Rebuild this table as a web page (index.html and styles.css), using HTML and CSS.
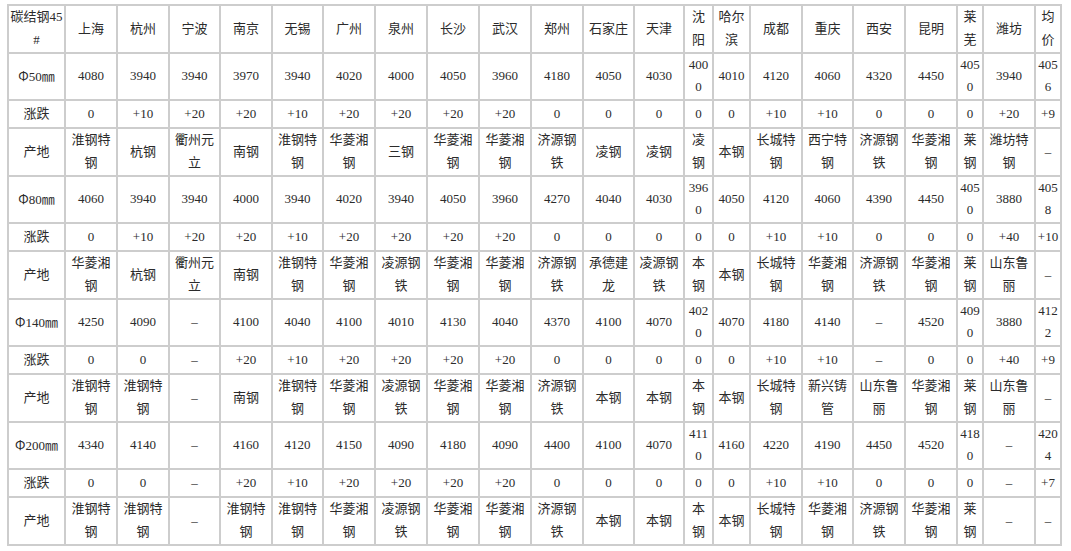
FILE: index.html
```html
<!DOCTYPE html>
<html lang="zh-CN">
<head>
<meta charset="utf-8">
<title>碳结钢45#价格</title>
<link rel="stylesheet" href="styles.css">
</head>
<body>
<table class="price-table">
<colgroup>
<col class="w57"><col class="w52"><col class="w52"><col class="w51"><col class="w52"><col class="w51"><col class="w52"><col class="w52"><col class="w52"><col class="w52"><col class="w52"><col class="w51"><col class="w50"><col class="w29"><col class="w37"><col class="w52"><col class="w51"><col class="w52"><col class="w52"><col class="w26"><col class="w52"><col class="w26">
</colgroup>
<tbody>
<tr class="tall"><td>碳结钢45#</td><td>上海</td><td>杭州</td><td>宁波</td><td>南京</td><td>无锡</td><td>广州</td><td>泉州</td><td>长沙</td><td>武汉</td><td>郑州</td><td>石家庄</td><td>天津</td><td>沈阳</td><td>哈尔滨</td><td>成都</td><td>重庆</td><td>西安</td><td>昆明</td><td>莱芜</td><td>潍坊</td><td>均价</td></tr>

<tr class="tall"><td><span class="phi">Φ</span>50㎜</td><td>4080</td><td>3940</td><td>3940</td><td>3970</td><td>3940</td><td>4020</td><td>4000</td><td>4050</td><td>3960</td><td>4180</td><td>4050</td><td>4030</td><td>4000</td><td>4010</td><td>4120</td><td>4060</td><td>4320</td><td>4450</td><td>4050</td><td>3940</td><td>4056</td></tr>
<tr class="short"><td>涨跌</td><td>0</td><td>+10</td><td>+20</td><td>+20</td><td>+10</td><td>+20</td><td>+20</td><td>+20</td><td>+20</td><td>0</td><td>0</td><td>0</td><td>0</td><td>0</td><td>+10</td><td>+10</td><td>0</td><td>0</td><td>0</td><td>+20</td><td>+9</td></tr>
<tr class="tall"><td>产地</td><td>淮钢特钢</td><td>杭钢</td><td>衢州元立</td><td>南钢</td><td>淮钢特钢</td><td>华菱湘钢</td><td>三钢</td><td>华菱湘钢</td><td>华菱湘钢</td><td>济源钢铁</td><td>凌钢</td><td>凌钢</td><td>凌钢</td><td>本钢</td><td>长城特钢</td><td>西宁特钢</td><td>济源钢铁</td><td>华菱湘钢</td><td>莱钢</td><td>潍坊特钢</td><td>–</td></tr>

<tr class="tall"><td><span class="phi">Φ</span>80㎜</td><td>4060</td><td>3940</td><td>3940</td><td>4000</td><td>3940</td><td>4020</td><td>3940</td><td>4050</td><td>3960</td><td>4270</td><td>4040</td><td>4030</td><td>3960</td><td>4050</td><td>4120</td><td>4060</td><td>4390</td><td>4450</td><td>4050</td><td>3880</td><td>4058</td></tr>
<tr class="short"><td>涨跌</td><td>0</td><td>+10</td><td>+20</td><td>+20</td><td>+10</td><td>+20</td><td>+20</td><td>+20</td><td>+20</td><td>0</td><td>0</td><td>0</td><td>0</td><td>0</td><td>+10</td><td>+10</td><td>0</td><td>0</td><td>0</td><td>+40</td><td>+10</td></tr>
<tr class="tall"><td>产地</td><td>华菱湘钢</td><td>杭钢</td><td>衢州元立</td><td>南钢</td><td>淮钢特钢</td><td>华菱湘钢</td><td>凌源钢铁</td><td>华菱湘钢</td><td>华菱湘钢</td><td>济源钢铁</td><td>承德建龙</td><td>凌源钢铁</td><td>本钢</td><td>本钢</td><td>长城特钢</td><td>华菱湘钢</td><td>济源钢铁</td><td>华菱湘钢</td><td>莱钢</td><td>山东鲁丽</td><td>–</td></tr>

<tr class="tall"><td><span class="phi">Φ</span>140㎜</td><td>4250</td><td>4090</td><td>–</td><td>4100</td><td>4040</td><td>4100</td><td>4010</td><td>4130</td><td>4040</td><td>4370</td><td>4100</td><td>4070</td><td>4020</td><td>4070</td><td>4180</td><td>4140</td><td>–</td><td>4520</td><td>4090</td><td>3880</td><td>4122</td></tr>
<tr class="short"><td>涨跌</td><td>0</td><td>0</td><td>–</td><td>+20</td><td>+10</td><td>+20</td><td>+20</td><td>+20</td><td>+20</td><td>0</td><td>0</td><td>0</td><td>0</td><td>0</td><td>+10</td><td>+10</td><td>–</td><td>0</td><td>0</td><td>+40</td><td>+9</td></tr>
<tr class="tall"><td>产地</td><td>淮钢特钢</td><td>淮钢特钢</td><td>–</td><td>南钢</td><td>淮钢特钢</td><td>华菱湘钢</td><td>凌源钢铁</td><td>华菱湘钢</td><td>华菱湘钢</td><td>济源钢铁</td><td>本钢</td><td>本钢</td><td>本钢</td><td>本钢</td><td>长城特钢</td><td>新兴铸管</td><td>山东鲁丽</td><td>华菱湘钢</td><td>莱钢</td><td>山东鲁丽</td><td>–</td></tr>

<tr class="tall"><td><span class="phi">Φ</span>200㎜</td><td>4340</td><td>4140</td><td>–</td><td>4160</td><td>4120</td><td>4150</td><td>4090</td><td>4180</td><td>4090</td><td>4400</td><td>4100</td><td>4070</td><td>4110</td><td>4160</td><td>4220</td><td>4190</td><td>4450</td><td>4520</td><td>4180</td><td>–</td><td>4204</td></tr>
<tr class="short"><td>涨跌</td><td>0</td><td>0</td><td>–</td><td>+20</td><td>+10</td><td>+20</td><td>+20</td><td>+20</td><td>+20</td><td>0</td><td>0</td><td>0</td><td>0</td><td>0</td><td>+10</td><td>+10</td><td>0</td><td>0</td><td>0</td><td>–</td><td>+7</td></tr>
<tr class="tall"><td>产地</td><td>淮钢特钢</td><td>淮钢特钢</td><td>–</td><td>淮钢特钢</td><td>淮钢特钢</td><td>华菱湘钢</td><td>凌源钢铁</td><td>华菱湘钢</td><td>华菱湘钢</td><td>济源钢铁</td><td>本钢</td><td>本钢</td><td>本钢</td><td>本钢</td><td>长城特钢</td><td>华菱湘钢</td><td>济源钢铁</td><td>华菱湘钢</td><td>莱钢</td><td>–</td><td>–</td></tr>
</tbody>
</table>
</body>
</html>
```

FILE: styles.css
```css
html, body {
  margin: 0;
  background: #ffffff;
}

body {
  padding: 4px 0 0 7px;
  font-family: "Liberation Serif", "Noto Sans CJK SC", serif;
  font-size: 13px;
  color: #2b2b2b;
}

.price-table {
  border-collapse: collapse;
  table-layout: fixed;
  width: 1053px;
}

.price-table td {
  border: 2px solid #cdcdcd;
  padding: 0 1px;
  line-height: 22.5px;
  text-align: center;
  vertical-align: middle;
  word-break: break-all;
  overflow-wrap: anywhere;
}

.price-table tr.tall td { height: 45.5px; }
.price-table tr.short td { height: 26px; }

.phi {
  font-family: "Noto Sans CJK SC", sans-serif;
}

.w57 { width: 57px; }
.w52 { width: 52px; }
.w51 { width: 51px; }
.w50 { width: 50px; }
.w37 { width: 37px; }
.w29 { width: 29px; }
.w26 { width: 26px; }
```
